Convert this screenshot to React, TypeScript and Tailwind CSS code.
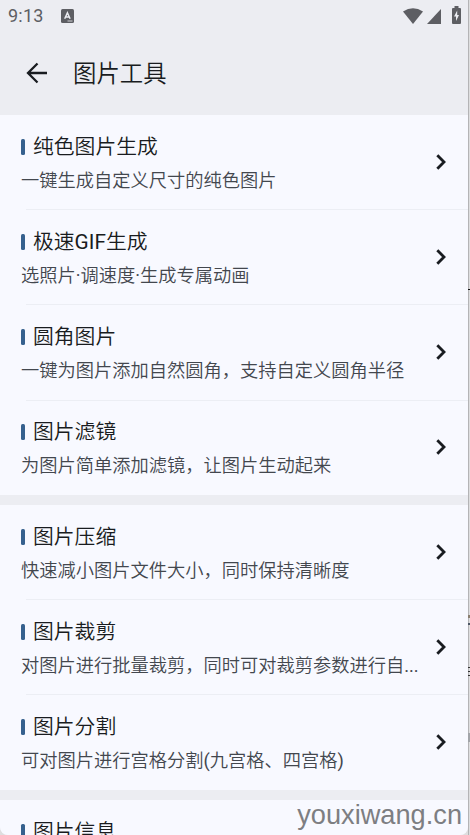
interface Tool {
  title: string;
  desc: string;
}

const GROUPS: Tool[][] = [
  [
    { title: "纯色图片生成", desc: "一键生成自定义尺寸的纯色图片" },
    { title: "极速GIF生成", desc: "选照片·调速度·生成专属动画" },
    { title: "圆角图片", desc: "一键为图片添加自然圆角，支持自定义圆角半径" },
    { title: "图片滤镜", desc: "为图片简单添加滤镜，让图片生动起来" },
  ],
  [
    { title: "图片压缩", desc: "快速减小图片文件大小，同时保持清晰度" },
    { title: "图片裁剪", desc: "对图片进行批量裁剪，同时可对裁剪参数进行自..." },
    { title: "图片分割", desc: "可对图片进行宫格分割(九宫格、四宫格)" },
  ],
  [{ title: "图片信息", desc: "" }],
];

// Marks that lie on the strip to the right of the screen
const EDGE_MARKS = [
  { top: 289, height: 1, className: "bg-[#111111]" },
  { top: 615, height: 3, className: "bg-[#8a7f70]" },
  { top: 623, height: 2, className: "bg-[#4c5664]" },
  { top: 667, height: 1, className: "bg-[#333333]" },
  { top: 671, height: 1, className: "bg-[#333333]" },
  { top: 675, height: 1, className: "bg-[#333333]" },
  { top: 733, height: 9, className: "bg-[#a2a5a9]" },
];

// Latin runs keep the regular weight, the Chinese text is a step lighter
function MixedText({ text }: { text: string }) {
  return text.split(/([A-Za-z().·]+)/).map((part, i) =>
    i % 2 ? (
      <span key={i} className="font-normal">
        {part}
      </span>
    ) : (
      part
    )
  );
}

// ── Status Bar ──────────────────────────────────────────────────
function StatusBar() {
  return (
    <div className="flex h-8 shrink-0 items-center pl-2 pr-[7px] text-[#5d5e63]">
      <span className="text-[18px] font-normal leading-8 tracking-[0.2px]">9:13</span>
      <svg className="ml-[17px]" width="13" height="14" viewBox="0 0 13 14">
        <rect width="13" height="14" rx="1.5" fill="currentColor" />
        <path d="M3.7 9.7 6.4 3.8 9.1 9.7M4.7 8h3.4" fill="none" stroke="#ecedf2" strokeWidth="1.5" />
        <path d="M6.5 12h5" stroke="#ecedf2" strokeWidth="0.8" />
      </svg>
      <svg className="ml-auto" width="20" height="16" viewBox="0 0 20 16">
        <path d="M0 3.4Q10-3 20 3.4L10 16Z" fill="currentColor" />
      </svg>
      <svg className="ml-1" width="14" height="15" viewBox="0 0 14 15">
        <path d="M14 0v15H0Z" fill="currentColor" />
      </svg>
      <svg className="ml-[11px] -mt-[2px]" width="9" height="18" viewBox="0 0 9 18">
        <path d="M2.5 0h4v2H8a1 1 0 0 1 1 1v14a1 1 0 0 1-1 1H1a1 1 0 0 1-1-1V3a1 1 0 0 1 1-1h1.500Z" fill="currentColor" />
        <path d="M5.200 4.500 2 10.500h2V15l3-6H5.200Z" fill="#ecedf2" />
      </svg>
    </div>
  );
}

// ── Tool Row ────────────────────────────────────────────────────
function ToolRow({ tool, last }: { tool: Tool; last: boolean }) {
  return (
    <div className="shrink-0">
      <div className="flex h-[94.2px] items-center pl-[21px] pr-[22px]">
        <div className="min-w-0 flex-1 pt-[1.4px]">
          <div className="flex items-center">
            <span className="h-4 w-1 rounded-[1.5px] bg-[#36618e]" />
            <span className="ml-2 text-[20.8px] leading-[32px] text-[#191c20]">
              <MixedText text={tool.title} />
            </span>
          </div>
          <p className="mt-1 h-7 whitespace-nowrap text-[18.25px] leading-[28px] text-[#43474e]">
            <MixedText text={tool.desc} />
          </p>
        </div>
        <svg className="mb-[1px] shrink-0 text-[#191c20]" width="10" height="16" viewBox="0 0 10 16">
          <path d="M1.300 1.300 8 8l-6.700 6.700" fill="none" stroke="currentColor" strokeWidth="2.800" />
        </svg>
      </div>
      {!last && <div className="ml-[26px] h-px bg-[#eceef4]" />}
    </div>
  );
}

export default function App() {
  return (
    <div
      lang="zh-CN"
      className="relative flex h-[835px] w-[470px] overflow-hidden bg-[#dededf] font-['Roboto','Noto_Sans_CJK_SC',sans-serif] font-[350]"
    >
      <div className="flex h-full w-[468px] flex-col overflow-hidden rounded-b-lg bg-[#ecedf2]">
        <StatusBar />
        <header className="flex h-[83px] shrink-0 items-center pb-[2px] pl-[26px]">
          <svg width="22" height="22" viewBox="0 0 22 22" fill="none" stroke="#191c20" strokeWidth="2.3">
            <path d="M11.500 1.500 2 11l9.500 9.500M2 11h19" />
          </svg>
          <h1 className="ml-[25px] mt-[2px] text-[23.4px] leading-[32px] text-[#191c20]">图片工具</h1>
        </header>
        <main className="flex flex-col gap-[10.3px]">
          {GROUPS.map((group, i) => (
            <section key={i} className="bg-[#f8f9ff]">
              {group.map((tool, j) => (
                <ToolRow key={tool.title} tool={tool} last={j === group.length - 1} />
              ))}
            </section>
          ))}
        </main>
      </div>
      <div className="h-full w-px bg-[#b4b4b6]" />
      {EDGE_MARKS.map((mark) => (
        <span
          key={mark.top}
          className={`absolute right-0 w-[2px] ${mark.className}`}
          style={{ top: mark.top, height: mark.height }}
        />
      ))}
      <span className="absolute bottom-[4px] right-[8px] font-['Liberation_Sans',sans-serif] text-[27.2px] font-normal leading-[32px] text-[#7d7e82]">
        youxiwang.cn
      </span>
    </div>
  );
}
